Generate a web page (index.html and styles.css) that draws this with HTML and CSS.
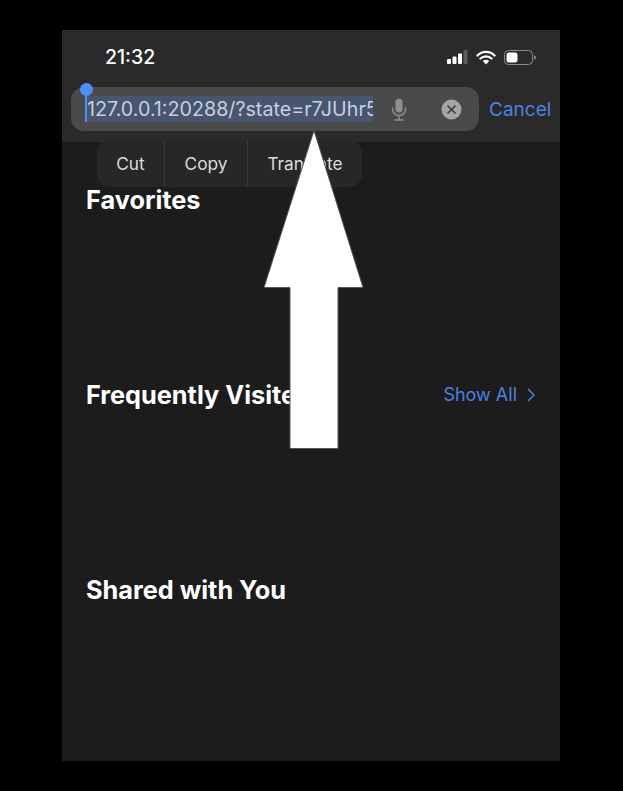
FILE: index.html
```html
<!DOCTYPE html>
<html lang="en">
<head>
    <meta charset="UTF-8">
    <meta name="viewport" content="width=device-width, initial-scale=1.0">
    <title>Safari address bar</title>
    <link rel="stylesheet" href="styles.css">
</head>
<body>
    <div class="phone">
        <header class="top">
            <div class="status">
                <span class="time">21:32</span>
                <div class="status-icons">
                    <svg class="signal" width="21" height="14" viewBox="0 0 21 14">
                        <rect x="0" y="9" width="4" height="5" rx="1" fill="#fff"/>
                        <rect x="5.500" y="6.500" width="4" height="7.500" rx="1" fill="#fff"/>
                        <rect x="11" y="3.500" width="4" height="10.500" rx="1" fill="#fff"/>
                        <rect x="16.500" y="0" width="4" height="14" rx="1" fill="#5c5c5c"/>
                    </svg>
                    <svg class="wifi" width="20" height="15" viewBox="0 0 20 15">
                        <path d="M1.500 5.500a12 12 0 0 1 17 0M4.500 8.500a8 8 0 0 1 11 0" fill="none" stroke="#fff" stroke-width="2.300" stroke-linecap="round"/>
                        <path d="M6.800 11a4.600 4.600 0 0 1 6.400 0L10 14.500z" fill="#fff"/>
                    </svg>
                    <svg class="battery" width="32" height="15" viewBox="0 0 32 15">
                        <rect x="0.500" y="0.500" width="28" height="14" rx="4" fill="none" stroke="#8a8a8a"/>
                        <rect x="2.500" y="2.500" width="11" height="10" rx="2.500" fill="#fff"/>
                        <path d="M30 5.500a2 2 0 0 1 0 4z" fill="#8a8a8a"/>
                    </svg>
                </div>
            </div>
            <div class="search-row">
                <div class="url-bar">
                    <div class="url-select">
                        <span class="url-text">127.0.0.1:20288/?state=r7JUhr5</span>
                        <i class="handle"></i>
                    </div>
                    <svg class="mic" width="16" height="23" viewBox="0 0 16 23">
                        <rect x="4.500" y="0.500" width="7" height="14" rx="3.500" fill="#8e8e8e"/>
                        <path d="M1.500 9.500v1.500a6.500 6.500 0 0 0 13 0V9.500M8 17.500v4M3.500 22h9" fill="none" stroke="#8e8e8e" stroke-width="1.500"/>
                    </svg>
                    <svg class="clear" width="21" height="21" viewBox="0 0 21 21">
                        <circle cx="10.500" cy="10.500" r="10" fill="#a5a5a8"/>
                        <path d="M7 7l7 7M14 7l-7 7" stroke="#3c3c3c" stroke-width="1.700" stroke-linecap="round"/>
                    </svg>
                </div>
                <span class="cancel">Cancel</span>
            </div>
        </header>

        <main class="content">
            <div class="menu">
                <span class="menu-item cut">Cut</span>
                <span class="menu-item copy">Copy</span>
                <span class="menu-item translate">Translate</span>
            </div>
            <section class="favorites">
                <h2>Favorites</h2>
            </section>
            <section class="frequent">
                <h2>Frequently Visited</h2>
                <span class="show-all">Show All
                    <svg width="10" height="14" viewBox="0 0 10 14"><path d="M2 1l6 6-6 6" fill="none" stroke="#4a82e0" stroke-width="1.500"/></svg>
                </span>
            </section>
            <section class="shared">
                <h2>Shared with You</h2>
            </section>
        </main>

        <svg class="arrow" width="101" height="320" viewBox="0 0 101 320">
            <path d="M51 .5L100 157.500H75V318.500H27V157.500H1z" fill="#fff" stroke="#555" stroke-width="1"/>
        </svg>
    </div>
</body>
</html>
```

FILE: styles.css
```css
html, body {
    margin: 0;
    height: 100%;
}

body {
    background-color: #000;
    font-family: Inter, "Liberation Sans", sans-serif;
    color: #fff;
    padding: 30px 63px 30px 62px;
    box-sizing: border-box;
    height: 791px;
    overflow: hidden;
}

.phone {
    position: relative;
    display: flex;
    flex-direction: column;
    height: 731px;
    background-color: #1c1c1c;
    overflow: hidden;
}

.top {
    height: 112px;
    box-sizing: border-box;
    background-color: #2a2a2a;
    padding: 0 9px;
    flex-shrink: 0;
}

.status {
    display: flex;
    justify-content: space-between;
    align-items: center;
    height: 57px;
    padding: 0 15px 3px 34px;
    box-sizing: border-box;
}

.time {
    font-size: 19.500px;
    font-weight: 500;
}

.status-icons {
    display: flex;
    align-items: center;
    gap: 8px;
}

.search-row {
    display: flex;
    align-items: center;
    gap: 10px;
}

.url-bar {
    display: flex;
    align-items: center;
    width: 408px;
    height: 44px;
    flex-shrink: 0;
    background-color: #4a4a4a;
    border-radius: 13px;
    padding-left: 14px;
    box-sizing: border-box;
}

.url-select {
    position: relative;
    width: 288px;
    height: 26px;
    background-color: #47566e;
    border-left: 2px solid #4f8ef7;
    box-sizing: border-box;
    flex-shrink: 0;
}

.url-text {
    display: block;
    width: 286px;
    overflow: hidden;
    white-space: nowrap;
    font-size: 19.700px;
    line-height: 27px;
    color: #c6d0de;
}

.handle {
    position: absolute;
    left: -7px;
    top: -13px;
    width: 13px;
    height: 13px;
    border-radius: 50%;
    background-color: #4f8ef7;
}

.mic {
    margin-left: 18px;
}

.clear {
    margin-left: 34px;
}

.cancel {
    font-size: 19px;
    color: #4a82e0;
}

.content {
    position: relative;
    flex: 1;
    padding: 0 24px;
}

.menu {
    position: absolute;
    left: 35px;
    top: -2px;
    display: flex;
    width: 265px;
    height: 47px;
    padding-bottom: 1px;
    box-sizing: border-box;
    background-color: #272727;
    border-radius: 13px;
    font-size: 17.300px;
    color: #dcdcdc;
}

.menu-item {
    display: flex;
    align-items: center;
    justify-content: center;
    border-left: 1px solid #3a3a3a;
    box-sizing: border-box;
}

.cut {
    width: 67px;
    border-left: 0;
}

.copy {
    width: 83px;
}

.translate {
    width: 115px;
}

h2 {
    margin: 0;
    font-size: 25.300px;
    font-weight: 700;
    line-height: 30px;
}

.favorites {
    padding-top: 43px;
    height: 238px;
    box-sizing: border-box;
}

.frequent {
    display: flex;
    justify-content: space-between;
    align-items: flex-start;
    height: 195px;
}

.show-all {
    display: flex;
    align-items: center;
    gap: 9px;
    font-size: 18px;
    line-height: 30px;
    color: #4a82e0;
}

.arrow {
    position: absolute;
    left: 201px;
    top: 100px;
}
```
